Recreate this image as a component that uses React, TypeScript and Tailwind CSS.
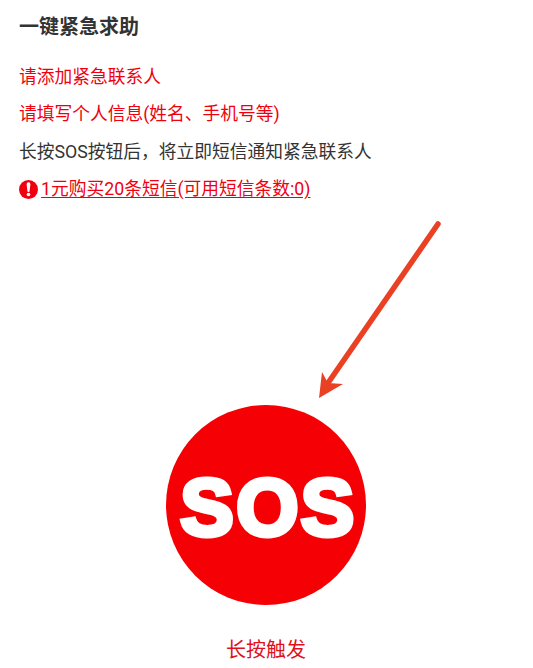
import React from "react";

const CJK = "font-['Roboto','Noto_Sans_CJK_SC',sans-serif]";

export default function App() {
	return (
		<div className={`w-[533px] h-[668px] overflow-hidden bg-white ${CJK}`}>
			<div className="px-[19px] pt-[13px]">
				<h1 className="text-[20px] leading-[28px] font-bold text-[#333333]">一键紧急求助</h1>
				<p className="mt-[23px] text-[17.75px] leading-[26px] text-[#f0000f]">请添加紧急联系人</p>
				<p className="mt-[11px] text-[17.75px] leading-[26px] text-[#f0000f]">请填写个人信息(姓名、手机号等)</p>
				<p className="mt-[12px] text-[17.75px] leading-[26px] text-[#333333]">长按SOS按钮后，将立即短信通知紧急联系人</p>
				<div className="mt-[11px] flex items-center gap-[3px] text-[#f0000f]">
					<svg width="19" height="19" viewBox="0 0 19 19" className="shrink-0">
						<circle cx="9.5" cy="9.5" r="9.5" fill="#f0000f" />
						<path d="M7.6 4.2 a1.9 1.9 0 0 1 3.8 0 L10.6 11 a1.1 1.1 0 0 1 -2.2 0 Z" fill="#fff" />
						<circle cx="9.5" cy="14.5" r="1.8" fill="#fff" />
					</svg>
					<span className="text-[17.75px] leading-[26px] underline underline-offset-2">1元购买20条短信(可用短信条数:0)</span>
				</div>
			</div>

			<svg width="533" height="191" viewBox="0 0 533 191" className="mt-[12px] block">
				<path d="M438 10 L328 169" stroke="#ea4125" strokeWidth="5.5" strokeLinecap="round" fill="none" />
				<path d="M319 184 L322 158 L328 169 L343 170 Z" fill="#ea4125" />
			</svg>

			<div className="pr-[1px] flex flex-col items-center">
				<div className="w-[200px] h-[200px] rounded-full bg-[#f50005] flex items-center justify-center pl-[5px] pt-[5px]">
					<span className="font-['Liberation_Sans',sans-serif] font-bold text-[80px] leading-none text-white [-webkit-text-stroke:5px_white] tracking-[2.5px]">SOS</span>
				</div>
				<p className="mt-[31px] text-[20px] leading-[28px] text-[#e0101c]">长按触发</p>
			</div>
		</div>
	);
}
